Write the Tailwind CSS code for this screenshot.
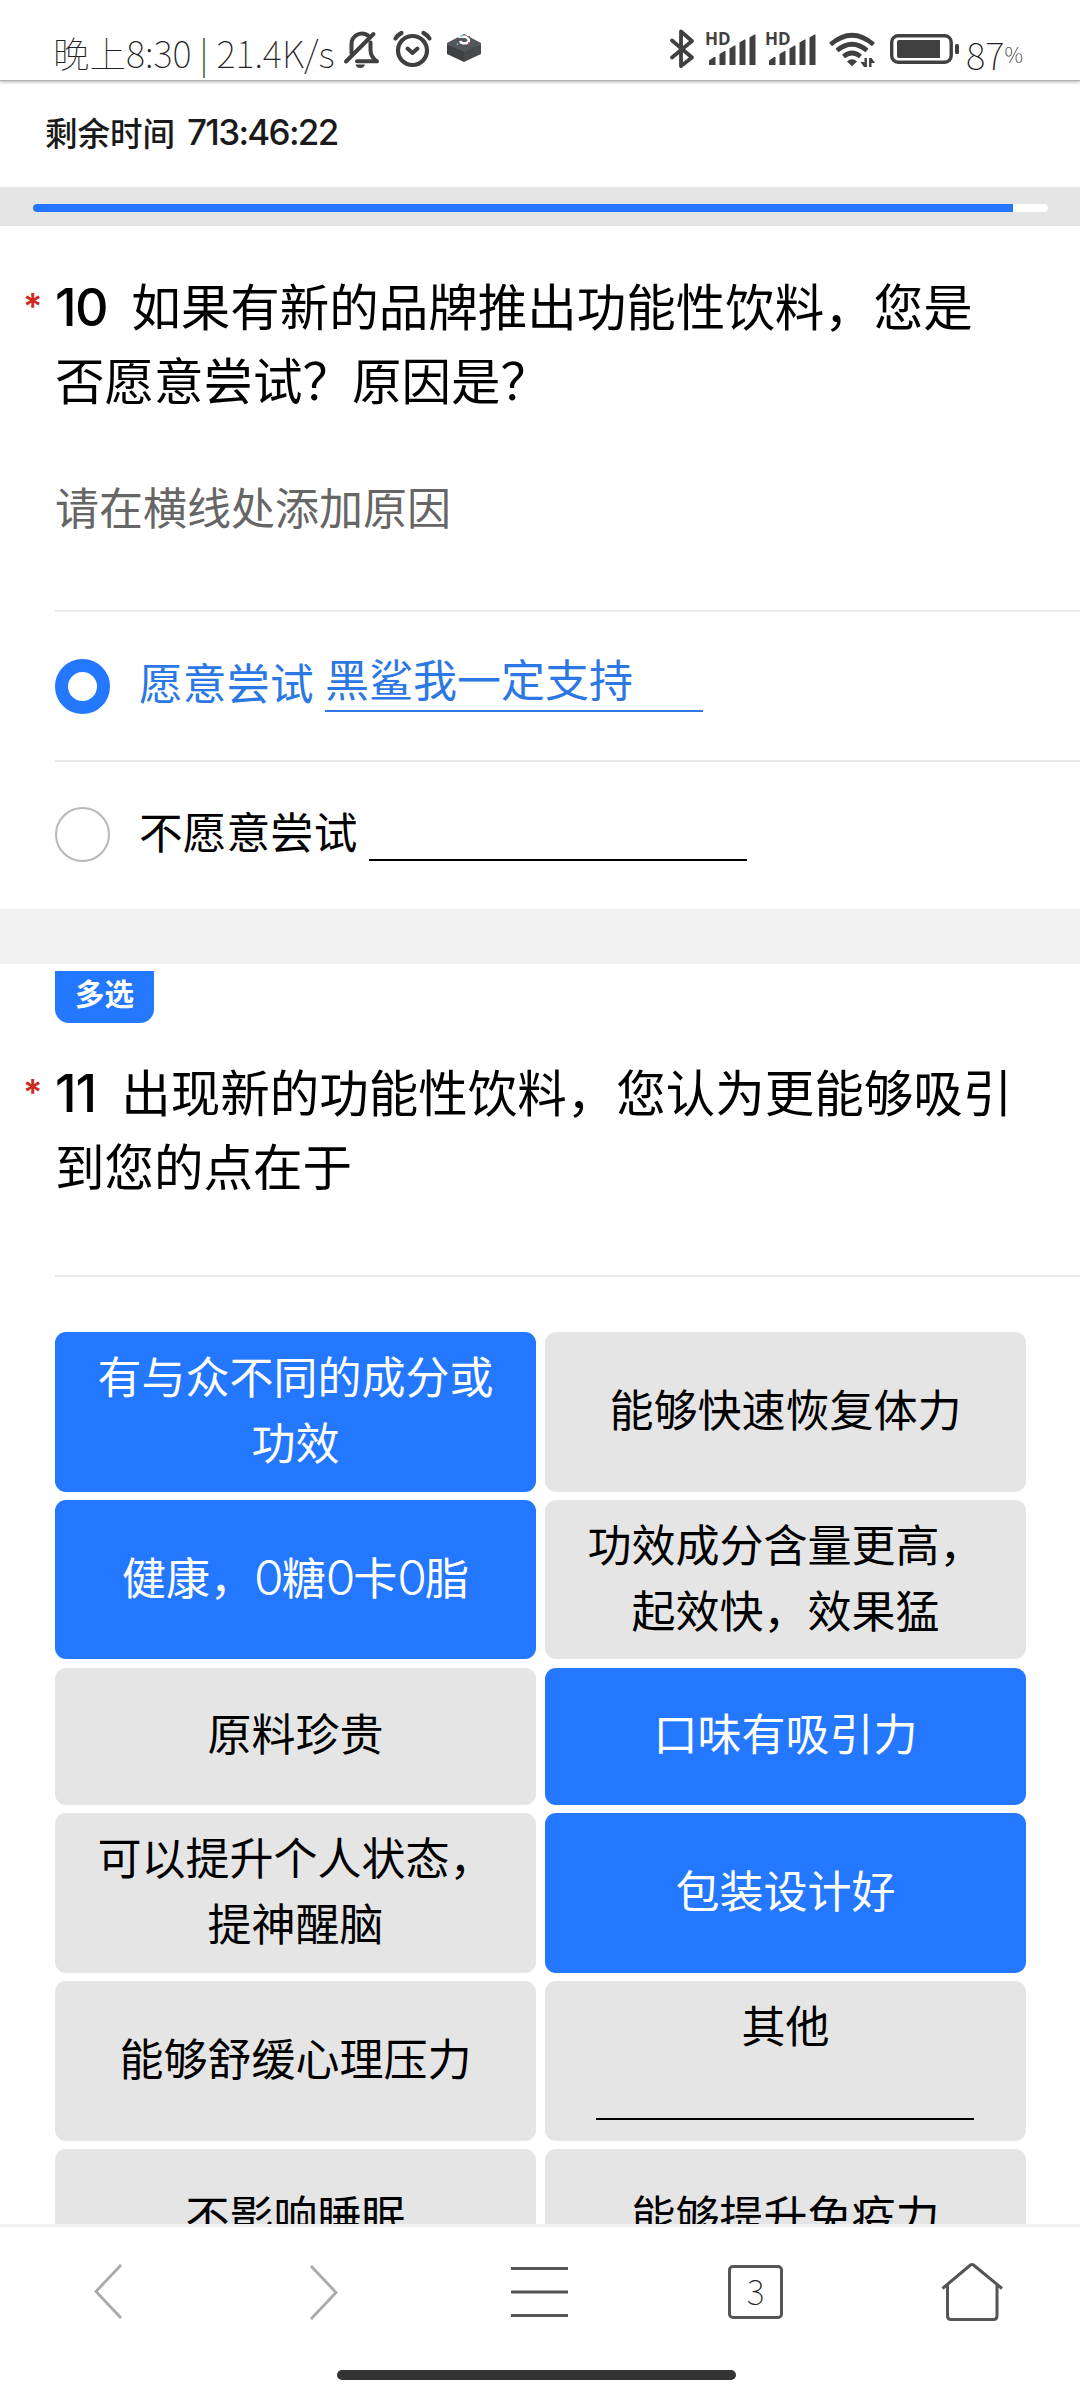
<!DOCTYPE html>
<html lang="zh-CN">
<head>
<meta charset="utf-8">
<title>问卷</title>
<script src="https://cdn.jsdelivr.net/npm/@tailwindcss/browser@4"></script>
</head>
<body class="bg-white">
<div class="flex h-[2400px] w-[1080px] flex-col overflow-hidden bg-white font-['Noto_Sans_CJK_SC',sans-serif] text-black">

  <!-- Status bar -->
  <header class="flex h-[81px] shrink-0 items-start border-b border-[#b3b3b3] pl-[53px] text-[#404040] shadow-[0_1px_3px_rgba(0,0,0,0.3)]">
    <div class="w-[290px] whitespace-nowrap pt-[27px] text-[36.500px] font-thin leading-[52px] text-[#222]">晚上8:30 | 21.4K/s</div>
    <svg class="mt-[28px] h-[42px] w-[38px] shrink-0" viewBox="343 28 38 42" fill="none" stroke="#404040" stroke-width="4" stroke-linecap="round" stroke-linejoin="round">
      <path d="M351.500 53V45a10.500 10.500 0 0 1 16.500-9.500M370.500 42.500V50q0 7 6.500 11.300H357" />
      <path d="M346 61.500L373.500 34" />
      <path d="M355.500 64.500h9.500q-1 3.500-4.700 3.500t-4.800-3.500z" fill="#404040" stroke="none"/>
    </svg>
    <svg class="ml-[10px] mt-[28px] h-[42px] w-[42px] shrink-0" viewBox="391 28 42 42" fill="none" stroke="#404040" stroke-width="4" stroke-linecap="round" stroke-linejoin="round">
      <circle cx="412.500" cy="50.500" r="14.500" stroke-width="4.200"/>
      <path d="M407.500 48.500l5 4.500 5-4.500"/>
      <path d="M395.500 38.500q2-3.500 6-5.500M429.500 38.500q-2-3.500-6-5.500" stroke-width="4.200"/>
    </svg>
    <svg class="ml-[13px] mt-[28px] h-[42px] w-[36px] shrink-0" viewBox="446 28 36 42">
      <path d="M447 44v10l17 8V50z" fill="#3e4042"/>
      <path d="M481 44v10l-17 8V50z" fill="#47494c"/>
      <path d="M447 43l17-9 17 9v1l-17 8-17-8z" fill="#54575a"/>
      <path d="M458 36.500l10 .5M460 41a4.500 3 0 1 0 6-3.500" fill="none" stroke="#fff" stroke-width="2.600"/>
      <path d="M460 36h3M457.500 43v2" stroke="#4ec9d8" stroke-width="1.200"/>
      <path d="M467 36.500h3M468.500 42v3" stroke="#e0506a" stroke-width="1.200"/>
    </svg>

    <svg class="ml-[186px] mt-[28px] h-[42px] w-[28px] shrink-0" viewBox="668 28 28 42" fill="none" stroke="#404040" stroke-width="3.800" stroke-linecap="round" stroke-linejoin="round">
      <path d="M672 40.500l20 17-11 8.500V31.500l11 9.500-20 16.500"/>
    </svg>
    <div class="relative ml-[10px] mt-[28px] h-[42px] w-[50px] shrink-0">
      <svg class="h-[42px] w-[50px]" viewBox="706 28 50 42" fill="#404040">
        <path d="M709 65V60.500l5-3.500h1.500v8h-6.500zM719.500 65V54l5-3h1v14h-6zM729.500 65V48.500l5-3h1v19.500h-6zM739.500 65V42.500l5-3h1v25.500h-6zM749.500 65V37.500l5-3h1v30.500h-6z"/>
      </svg>
      <span class="absolute left-[-1px] top-[2px] font-['Open_Sans',sans-serif] text-[17px] font-bold leading-[18px]">HD</span>
    </div>
    <div class="relative ml-[10px] mt-[28px] h-[42px] w-[50px] shrink-0">
      <svg class="h-[42px] w-[50px]" viewBox="706 28 50 42" fill="#404040">
        <path d="M709 65V60.500l5-3.500h1.500v8h-6.500zM719.500 65V54l5-3h1v14h-6zM729.500 65V48.500l5-3h1v19.500h-6zM739.500 65V42.500l5-3h1v25.500h-6zM749.500 65V37.500l5-3h1v30.500h-6z"/>
      </svg>
      <span class="absolute left-[-1px] top-[2px] font-['Open_Sans',sans-serif] text-[17px] font-bold leading-[18px]">HD</span>
    </div>
    <svg class="ml-[12px] mt-[28px] h-[42px] w-[48px] shrink-0" viewBox="828 28 48 42" fill="none" stroke="#404040" stroke-width="4.600">
      <path d="M830.500 44.500Q852 26 873.500 44.500M837 50.500Q852 38 867 50.500M843.500 56.500Q852 49.500 860.500 56.500"/>
      <path d="M847 61.500q5-4.500 10 0l-5 4.800z" fill="#404040" stroke="none"/>
      <path d="M865.700 58v9M870.300 67V58" stroke-width="2.400"/>
      <path d="M866 67h-2l-3.500-5h4zM870 58h1.500l3.500 5h-4z" fill="#404040" stroke="none"/>
    </svg>
    <svg class="ml-[13px] mt-[28px] h-[42px] w-[72px] shrink-0" viewBox="889 28 72 42" fill="#404040">
      <rect x="891.700" y="35.700" width="59.500" height="26.600" rx="6.500" fill="none" stroke="#404040" stroke-width="3.400"/>
      <path d="M899 40H940V58H899q-2 0-2-2V42q0-2 2-2z"/>
      <rect x="955" y="44" width="4" height="10" rx="1.500"/>
    </svg>
    <div class="ml-[5px] flex items-start whitespace-nowrap font-thin text-[#222]">
      <span class="pt-[28px] text-[37px] leading-[52px]">87</span><span class="pt-[38px] text-[21px] leading-[32px]">%</span>
    </div>
  </header>

  <!-- Remaining time -->
  <div class="flex h-[106px] shrink-0 items-center pb-[5px] pl-[45px] text-[32.500px] font-medium leading-[50px] text-[#1a1a1a]">
    <span>剩余时间</span><span class="ml-[12px] font-['Inter',sans-serif] text-[35px] tracking-[-1.7px]">713:46:22</span>
  </div>

  <!-- Progress -->
  <div class="flex h-[39px] shrink-0 items-start bg-[#e5e5e5] pl-[33px] pt-[17px]">
    <div class="h-[8px] w-[1015px] overflow-hidden rounded-full bg-white">
      <div class="h-full bg-[#2478ff]" style="width:96.55%"></div>
    </div>
  </div>

  <main class="flex h-[1998px] shrink-0 flex-col overflow-hidden">
    <!-- Question 10 -->
    <section class="h-[683px] shrink-0 pl-[55px]">
      <div class="flex h-[386px] flex-col border-b-2 border-[#ebebeb] pt-[42px]">
        <h2 class="relative whitespace-nowrap text-[49.5px] leading-[74px]"><span class="absolute left-[-32px] top-[1px] font-['Inter',sans-serif] text-[36px] font-semibold text-[#d0281e]">*</span><span class="mr-[24px] font-['Inter',sans-serif] text-[52px] font-medium leading-[1] tracking-[-1.500px]">10</span>如果有新的品牌推出功能性饮料，您是<br>否愿意尝试？原因是？</h2>
        <p class="mt-[57px] text-[44px] leading-[66px] text-[#666]">请在横线处添加原因</p>
      </div>
      <label class="flex h-[150px] items-start border-b-2 border-[#e8e8e8] text-[44px] leading-[56px] text-[#2b78e4]">
        <span class="mt-[47px] h-[55px] w-[55px] rounded-full border-[13px] border-[#2478ff]"></span>
        <span class="ml-[29px] mt-[41px] w-[175px] text-[43.700px]">愿意尝试</span>
        <span class="ml-[11px] mt-[38px] h-[62px] w-[378px] border-b-2 border-[#2b78e4]">黑鲨我一定支持</span>
      </label>
      <label class="flex h-[147px] items-start text-[44px] leading-[56px]">
        <span class="mt-[45px] h-[55px] w-[55px] rounded-full border-2 border-[#b8b8b8]"></span>
        <span class="ml-[29px] mt-[40px] w-[219px] text-[43.700px]">不愿意尝试</span>
        <span class="ml-[11px] mt-[38px] h-[61px] w-[378px] border-b-2 border-black"></span>
      </label>
    </section>
    <div class="h-[55px] shrink-0 bg-[#f1f1f1]"></div>

    <!-- Question 11 -->
    <section class="shrink-0 pl-[55px] pt-[7px]">
      <span class="block h-[52px] w-[99px] rounded-b-[14px] bg-[#2478ff] text-center text-[29.500px] font-bold leading-[43px] text-white">多选</span>
      <div class="flex h-[254px] flex-col border-b-2 border-[#ebebeb] pt-[31px]">
        <h2 class="relative whitespace-nowrap text-[49.5px] leading-[74px]"><span class="absolute left-[-32px] top-[1px] font-['Inter',sans-serif] text-[36px] font-semibold text-[#d0281e]">*</span><span class="mr-[25px] font-['Inter',sans-serif] text-[52px] font-medium leading-[1] tracking-[-1px]">11</span>出现新的功能性饮料，您认为更能够吸引<br>到您的点在于</h2>
      </div>
      <div class="mt-[55px] grid w-[971px] grid-cols-2 grid-rows-[159.500px_159.500px_137.500px_159.500px_159.500px_137.500px] gap-x-[9px] gap-y-[8.250px] text-center text-[44px] leading-[66px] *:flex *:flex-col *:items-center *:justify-center *:rounded-[11px] *:pb-[8px]">
        <div class="bg-[#2478ff] text-white"><span>有与众不同的成分或<br>功效</span></div>
        <div class="bg-[#e5e5e5]">能够快速恢复体力</div>
        <div class="bg-[#2478ff] text-white"><span>健康，<span class="font-['Inter',sans-serif] text-[48px] font-light leading-[1] tracking-[-2px]">0</span>糖<span class="font-['Inter',sans-serif] text-[48px] font-light leading-[1] tracking-[-2px]">0</span>卡<span class="font-['Inter',sans-serif] text-[48px] font-light leading-[1] tracking-[-2px]">0</span>脂</span></div>
        <div class="bg-[#e5e5e5]"><span>功效成分含量更高，<br>起效快，效果猛</span></div>
        <div class="bg-[#e5e5e5]">原料珍贵</div>
        <div class="bg-[#2478ff] text-white">口味有吸引力</div>
        <div class="bg-[#e5e5e5]"><span>可以提升个人状态，<br>提神醒脑</span></div>
        <div class="bg-[#2478ff] text-white">包装设计好</div>
        <div class="bg-[#e5e5e5]">能够舒缓心理压力</div>
        <div class="bg-[#e5e5e5]"><span>其他</span><span class="mb-[3px] mr-[2px] h-[63px] w-[378px] border-b-2 border-black"></span></div>
        <div class="bg-[#e5e5e5]">不影响睡眠</div>
        <div class="bg-[#e5e5e5]">能够提升免疫力</div>
      </div>
    </section>
  </main>

  <!-- Browser toolbar -->
  <nav class="flex h-[176px] shrink-0 flex-col border-t-[3px] border-[#f1f1f1] bg-white">
    <div class="flex pl-[90px] pt-[31px]">
      <svg class="h-[70px] w-[36px]" viewBox="90 2258 36 70" fill="none" stroke="#aaa" stroke-width="2.800"><path d="M121 2265L96 2291.500 121 2318"/></svg>
      <svg class="ml-[180px] h-[70px] w-[36px]" viewBox="306 2258 36 70" fill="none" stroke="#aaa" stroke-width="2.800"><path d="M311 2266L336 2292.500 311 2319"/></svg>
      <svg class="ml-[169px] h-[70px] w-[57px]" viewBox="511 2258 57 70" fill="none" stroke="#555" stroke-width="3"><path d="M511 2268.500h57M511 2292h57M511 2315.500h57"/></svg>
      <div class="ml-[160px] mt-[7px] flex h-[54px] w-[55px] items-center justify-center rounded-[5px] border-[3px] border-[#555] pb-[2px] text-[34px] font-thin leading-none text-[#222]">3</div>
      <svg class="ml-[157px] h-[70px] w-[64px]" viewBox="940 2258 64 70" fill="none" stroke="#555" stroke-width="3" stroke-linejoin="round"><path d="M942.500 2288.500L970.500 2265q1.500-1 3 0L1002 2288.500M947.500 2285V2316q0 3.500 3.500 3.500H993.500q3.500 0 3.500-3.500V2285"/></svg>
    </div>
    <div class="ml-[337px] mt-[42px] h-[10px] w-[399px] rounded-full bg-[#333]"></div>
  </nav>
</div>
</body>
</html>
